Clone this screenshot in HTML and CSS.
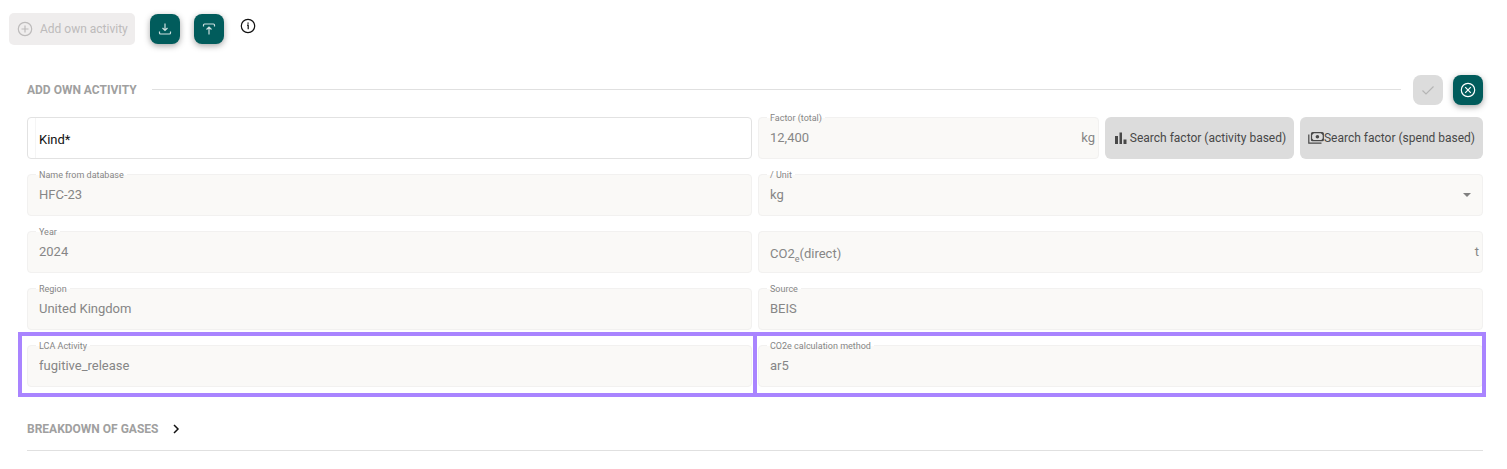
FILE: index.html
```html
<!DOCTYPE html>
<html lang="en">
<head>
  <meta charset="UTF-8" />
  <meta name="viewport" content="width=device-width, initial-scale=1.0"/>
  <title>Add own activity</title>
  <link rel="stylesheet" href="styles.css">
</head>
<body>
  <div class="toolbar">
    <button type="button" class="add-btn" disabled>
      <svg width="16" height="16" viewBox="0 0 16 16"><circle cx="8" cy="8" r="6.7"/><path d="M8 4.5v7M4.5 8h7"/></svg>
      Add own activity
    </button>
    <button type="button" class="icon-btn" aria-label="Download">
      <svg class="thin" width="16" height="16" viewBox="0 0 16 16"><path d="M8 2.5v7M5.500 7L8 9.500 10.500 7M2.500 10.500v1.500q0 1 1 1h9q1 0 1-1v-1.500"/></svg>
    </button>
    <button type="button" class="icon-btn" aria-label="Upload">
      <svg class="thin" width="16" height="16" viewBox="0 0 16 16"><path d="M8 13.500v-7.500M5.500 8.500L8 6l2.500 2.500M2.500 5.500V4q0-1 1-1h9q1 0 1 1v1.500"/></svg>
    </button>
    <button type="button" class="info-btn" aria-label="Info">
      <svg width="16" height="16" viewBox="0 0 16 16"><circle cx="8" cy="8" r="6.7"/><path d="M7 7.200h1.200v4"/><path class="dot" d="M7.400 4.500h1.300v1.300H7.400z"/></svg>
    </button>
  </div>

  <form class="activity">
    <div class="section-head">
      <h2>Add own activity</h2>
      <hr />
      <button type="button" class="icon-btn" aria-label="Save" disabled>
        <svg width="16" height="16" viewBox="0 0 16 16"><path d="M2.500 8.500L6 12l7.500-7.500"/></svg>
      </button>
      <button type="button" class="icon-btn" aria-label="Cancel">
        <svg width="16" height="16" viewBox="0 0 16 16"><circle cx="8" cy="8" r="6.7"/><path d="M5.200 5.200l5.600 5.600M10.800 5.200l-5.600 5.600"/></svg>
      </button>
    </div>

    <div class="fields">
      <div class="field field-open">
        <label for="kind" class="inside">Kind*</label>
        <input type="text" id="kind" />
      </div>
      <div class="factor-row">
        <div class="field">
          <label for="factor">Factor (total)</label>
          <input type="text" id="factor" value="12,400" disabled />
          <span class="suffix">kg</span>
        </div>
        <button type="button" class="search-btn search-activity">
          <svg width="16" height="16" viewBox="0 0 16 16"><path class="solid" d="M2 6h3v8H2zM6.500 2.500h2.500V14H6.500zM10.500 9.500h3V14h-3z"/></svg>
          Search factor (activity based)
        </button>
        <button type="button" class="search-btn search-spend">
          <svg width="16" height="16" viewBox="0 0 16 16"><rect x="3.500" y="2.700" width="11.800" height="8" rx="1"/><path d="M.8 4.500v8.700h12.700"/><circle class="solid" cx="9.400" cy="6.700" r="1.800"/><path class="solid" d="M3.500 3H6L3.500 5.500zM15.300 3h-2.500l2.500 2.500zM3.500 10.500H6L3.500 8zM15.300 10.500h-2.500l2.500-2.500z"/></svg>
          Search factor (spend based)
        </button>
      </div>

      <div class="field">
        <label for="name">Name from database</label>
        <input type="text" id="name" value="HFC-23" disabled />
      </div>
      <div class="field">
        <label for="unit">/ Unit</label>
        <select id="unit" disabled>
          <option>kg</option>
        </select>
        <svg class="arrow" width="8" height="4" viewBox="0 0 8 4"><path d="M0 0h8L4 4z"/></svg>
      </div>

      <div class="field">
        <label for="year">Year</label>
        <input type="text" id="year" value="2024" disabled />
      </div>
      <div class="field">
        <label for="co2" class="inside">CO2<sub>e</sub>(direct)</label>
        <input type="text" id="co2" disabled />
        <span class="suffix">t</span>
      </div>

      <div class="field">
        <label for="region">Region</label>
        <input type="text" id="region" value="United Kingdom" disabled />
      </div>
      <div class="field">
        <label for="source">Source</label>
        <input type="text" id="source" value="BEIS" disabled />
      </div>

      <div class="field highlight">
        <label for="lca">LCA Activity</label>
        <input type="text" id="lca" value="fugitive_release" disabled />
      </div>
      <div class="field highlight">
        <label for="method">CO2e calculation method</label>
        <input type="text" id="method" value="ar5" disabled />
      </div>
    </div>

    <button type="button" class="breakdown">
      Breakdown of gases
      <svg width="8" height="10" viewBox="0 0 8 10"><path d="M2 1l4 4-4 4"/></svg>
    </button>
  </form>
</body>
</html>
```
FILE: styles.css
```css
* {
  box-sizing: border-box;
}

body {
  margin: 0;
  background: #fff;
  font-family: Roboto, sans-serif;
  font-size: 13px;
  color: #868686;
}

button, input, select {
  font: inherit;
  color: inherit;
}

button {
  display: flex;
  align-items: center;
  justify-content: center;
  padding: 0;
  border: none;
  cursor: pointer;
}

svg {
  flex: none;
  fill: none;
  stroke: currentColor;
  stroke-width: 1.2;
}

.thin {
  color: #cfe0e0;
}

.toolbar {
  display: flex;
  align-items: center;
  gap: 14px;
  padding: 13px 9px 0;
}

.add-btn {
  height: 32px;
  padding: 0 7px 0 8px;
  gap: 7px;
  margin-right: 1px;
  border-radius: 5px;
  background: #efeded;
  color: #bdbbbb;
  font-size: 12px;
}

.icon-btn {
  width: 30px;
  height: 30px;
  border-radius: 8px;
  background: #015c5c;
  color: #fff;
  box-shadow: 0 2px 6px rgba(0, 0, 0, 0.35);
}

.icon-btn:disabled {
  background: #dcdcdc;
  color: #b5b5b5;
  box-shadow: none;
}

.info-btn {
  align-self: flex-start;
  margin: 5px 0 0 2px;
  background: none;
  color: #111;
}

.dot, .solid {
  fill: currentColor;
  stroke: none;
}

.activity {
  padding: 30px 24px 0 27px;
}

.section-head {
  display: flex;
  align-items: center;
  gap: 10px;
  margin-bottom: 12px;
}

h2, .breakdown {
  margin: 0;
  font-size: 12px;
  font-weight: 700;
  text-transform: uppercase;
  color: #a0a0a0;
}

hr {
  flex: 1;
  margin: 0 2px 1px 5px;
  border: none;
  border-top: 1px solid #e0e0e0;
}

.fields {
  display: grid;
  grid-template-columns: 1fr 1fr;
  gap: 15px 6px;
}

.factor-row {
  display: flex;
  gap: 6px;
}

.factor-row .field {
  flex: 1;
}

.field {
  position: relative;
}

.field input, .field select {
  display: block;
  width: 100%;
  height: 42px;
  padding: 0 11px 2px;
  border: 1px solid #f2f1f0;
  border-radius: 4px;
  background: #faf9f7;
  color: #868686;
  opacity: 1;
  appearance: none;
}

.field label {
  position: absolute;
  top: -6px;
  left: 9px;
  padding: 0 3px;
  background: linear-gradient(#fff 7px, #faf9f7 7px);
  font-size: 9px;
  line-height: 14px;
}

.field label.inside {
  top: 14px;
  background: none;
  font-size: 13px;
  line-height: 18px;
}

.field-open label.inside {
  color: #111;
}

.field-open input {
  border-color: #e2e2e2;
  background: linear-gradient(#f5f5f5, #f5f5f5) 7px 0 / 1px 100% no-repeat #fff;
}

sub {
  font-size: 9px;
  line-height: 0;
}

.suffix {
  position: absolute;
  top: 12px;
  right: 4px;
  line-height: 18px;
}

.arrow {
  position: absolute;
  top: 19px;
  right: 12px;
  fill: #808080;
  stroke: none;
}

.search-btn {
  border-radius: 6px;
  background: #dcdcdc;
  color: #484848;
  font-size: 12px;
}

.search-activity {
  width: 189px;
  gap: 1px;
}

.search-spend {
  width: 183px;
}

/* frame around the two fields of the last row */
.highlight::after {
  content: "";
  position: absolute;
  inset: -13px -5px -10px -9px;
  border: 4px solid #a984ff;
  pointer-events: none;
}

.highlight + .highlight::after {
  right: -3px;
  left: -5px;
}

.breakdown {
  width: 100%;
  height: 43px;
  margin-top: 21px;
  padding-bottom: 1px;
  justify-content: flex-start;
  gap: 14px;
  border-bottom: 1px solid #e0e0e0;
  background: none;
}

.breakdown svg {
  color: #111;
  stroke-width: 1.5;
}
```
